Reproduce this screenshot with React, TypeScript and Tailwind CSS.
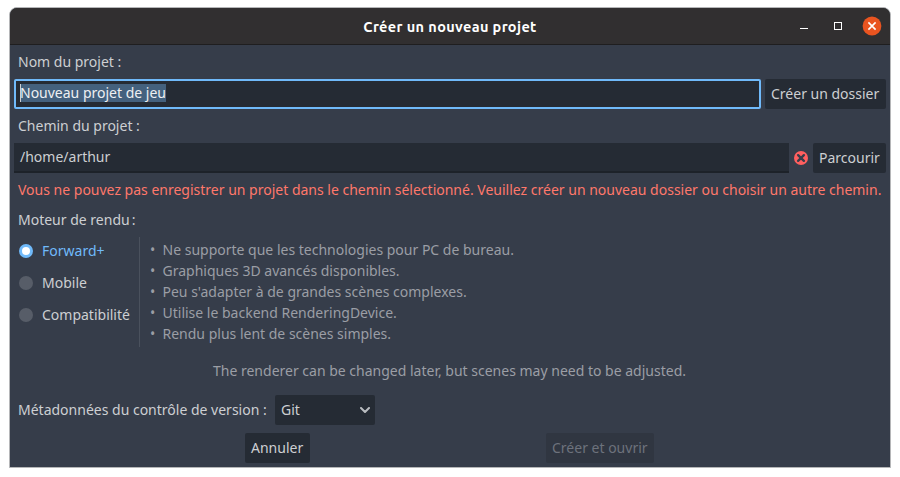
import type { ReactNode } from "react";

const features = [
  "Ne supporte que les technologies pour PC de bureau.",
  "Graphiques 3D avancés disponibles.",
  "Peu s'adapter à de grandes scènes complexes.",
  "Utilise le backend RenderingDevice.",
  "Rendu plus lent de scènes simples.",
];

function TitleBar() {
  return (
    <header className="flex h-[37px] shrink-0 items-center rounded-t-[7px] border-b border-[#1f1e1f] bg-[#312f30] pr-[8px] pl-[94px]">
      <h1 className="flex-1 pt-px text-center font-['Ubuntu','Noto_Sans',sans-serif] text-[14.5px] leading-[20px] font-bold tracking-[0.38px] text-white">
        Créer un nouveau projet
      </h1>
      <div className="flex items-center">
        <svg width="86" height="20" viewBox="0 0 86 20" fill="none">
          <path d="M4 12.5h8" stroke="#fff" />
          <rect x="38.5" y="6.5" width="7" height="7" stroke="#fff" />
          <circle cx="76" cy="10" r="9.4" fill="#e95420" />
          <path d="M72.4 6.4l7.2 7.2M79.6 6.4l-7.2 7.2" stroke="#fff" strokeWidth="1.6" />
        </svg>
      </div>
    </header>
  );
}

function Button({ children, className }: { children: ReactNode; className: string }) {
  return (
    <button className={`h-[30px] shrink-0 rounded-[2px] pl-[6px] text-left whitespace-nowrap ${className}`}>
      {children}
    </button>
  );
}

function Radio({ label, selected = false }: { label: string; selected?: boolean }) {
  return (
    <div className="flex h-8 items-center gap-[9px]">
      <span
        className={
          selected
            ? "size-[14px] rounded-full border-[3px] border-[#70bafa] bg-white"
            : "size-[14px] rounded-full bg-[#575d68]"
        }
      />
      <span className={selected ? "text-[#70bafa]" : ""}>{label}</span>
    </div>
  );
}

export default function App() {
  return (
    <div className="h-[477px] w-[900px] bg-white px-[9px] pt-[7px]">
      <div className="flex h-[461px] w-[882px] flex-col rounded-t-[8px] border border-[#b5b6b8] bg-[#363d4a] font-['Noto_Sans',sans-serif] text-[14px] leading-[20px] text-[#cdcfd2]">
        <TitleBar />
        <main className="flex flex-1 flex-col px-[4px]">
          <label className="pt-[7px] pb-[7px] pl-[4px]">Nom du projet :</label>
          <div className="flex gap-[4px]">
            <div className="flex h-[30px] flex-1 items-center rounded-[2px] border-2 border-[#70bafa] bg-[#252b34] pl-[4px]">
              <span className="mb-[2px] h-[18px] bg-[#44617e] leading-[17px] text-[#eef0f2] shadow-[inset_1px_0_#cdcfd2]">
                Nouveau projet de jeu
              </span>
            </div>
            <Button className="w-[121px] bg-[#252b34]">Créer un dossier</Button>
          </div>
          <label className="pt-[7px] pb-[7px] pl-[4px]">Chemin du projet :</label>
          <div className="flex items-center">
            <div className="h-[30px] flex-1 border-b-2 border-[#1d2229] bg-[#252b34] pt-[4px] pl-[6px]">
              /home/arthur
            </div>
            <svg className="mx-[5px]" width="14" height="14" viewBox="0 0 14 14" fill="none">
              <circle cx="7" cy="7" r="7" fill="#ff5f5f" />
              <path d="M4.1 4.1l5.8 5.8M9.9 4.1l-5.8 5.8" stroke="#363d4a" strokeWidth="2.3" strokeLinecap="round" />
            </svg>
            <Button className="w-[73px] bg-[#252b34]">Parcourir</Button>
          </div>
          <p className="pt-[7px] pl-[4px] whitespace-nowrap text-[#ff786b]">
            Vous ne pouvez pas enregistrer un projet dans le chemin sélectionné. Veuillez créer un
            nouveau dossier ou choisir un autre chemin.
          </p>
          <p className="mt-[10px] pl-[4px]">
            Moteur de rendu<span className="ml-[2px]">:</span>
          </p>
          <div className="mt-[5px] flex h-[112px] pl-[5px]">
            <div className="w-[120px]">
              <Radio label="Forward+" selected />
              <Radio label="Mobile" />
              <Radio label="Compatibilité" />
            </div>
            <div className="mt-[2px] h-[110px] w-px bg-[#4a515d]" />
            <ul className="mt-[4px] ml-[10px] text-[#9b9ea5]">
              {features.map((feature) => (
                <li key={feature} className="flex h-[21px] items-center">
                  <span className="w-[12.5px]">•</span>
                  {feature}
                </li>
              ))}
            </ul>
          </div>
          <p className="mt-[14px] pr-px text-center text-[#9b9ea5]">
            The renderer can be changed later, but scenes may need to be adjusted.
          </p>
          <div className="mt-[14px] flex items-center pl-[4px]">
            <span className="w-[257px]">Métadonnées du contrôle de version :</span>
            <div className="flex h-[30px] w-[100px] items-center justify-between rounded-[2px] bg-[#252b34] pr-[5px] pl-[6px]">
              Git
              <svg width="10" height="6" viewBox="0 0 10 6" fill="none">
                <path d="M1 1l4 4 4-4" stroke="#b9bcc0" strokeWidth="2" strokeLinecap="round" strokeLinejoin="round" />
              </svg>
            </div>
          </div>
          <footer className="mt-[8px] flex justify-between pr-[232px] pl-[231px]">
            <Button className="w-[65px] bg-[#252b34]">Annuler</Button>
            <Button className="w-[108px] bg-[#303641] text-[#6d727c]">Créer et ouvrir</Button>
          </footer>
        </main>
      </div>
    </div>
  );
}
